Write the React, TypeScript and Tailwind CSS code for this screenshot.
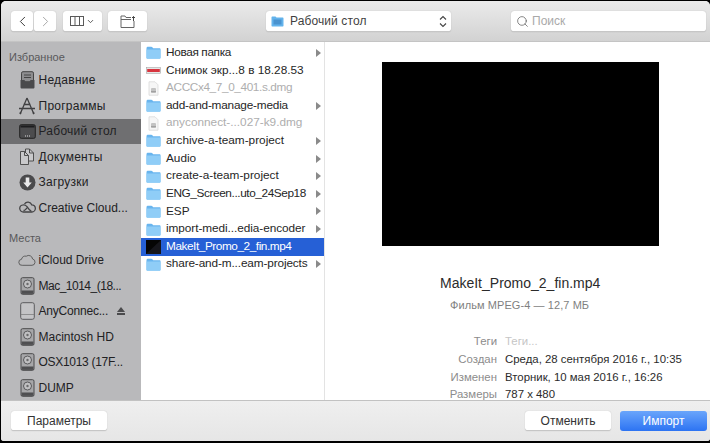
import React from "react";
import { ChevronLeft, ChevronRight, ChevronDown, Search } from "lucide-react";

const Folder = () => (
  <svg width="15" height="13" viewBox="0 0 15 13" className="shrink-0">
    <path d="M0.5 2.2C0.5 1.2 1 .7 2 .7h3.2c.7 0 1 .2 1.4.7l.6.8h6.3c.7 0 1 .4 1 1v8.3c0 .7-.4 1-1 1H1.5c-.7 0-1-.4-1-1z" fill="#69b5ee" />
    <path d="M.5 3.6h14v8.2c0 .7-.4 1-1 1H1.5c-.7 0-1-.4-1-1z" fill="#8fcdf7" />
  </svg>
);
const Dmg = () => (
  <svg width="15" height="15" viewBox="0 0 15 15" className="shrink-0">
    <path d="M3 .8h6l3 3v10.400H3z" fill="#f6f6f6" stroke="#d9d9d9" strokeWidth=".8" />
    <rect x="5" y="7" width="5" height="5" rx="1" fill="#c3c3c3" />
    <rect x="5" y="10.200" width="5" height="1" fill="#999" />
  </svg>
);
const Shot = () => (
  <svg width="15" height="7" viewBox="0 0 15 7" className="shrink-0">
    <rect x=".3" y=".5" width="14.400" height="6" fill="#e6e6e6" stroke="#999" strokeWidth=".5" />
    <rect x="1.200" y="2" width="12.600" height="3" fill="#d8353f" />
  </svg>
);
const Thumb = () => (
  <svg width="15" height="14" viewBox="0 0 15 14" className="shrink-0">
    <rect width="15" height="14" fill="#050505" />
    <path d="M0 14 15 0v14z" fill="#16161c" />
  </svg>
);
const Disk = () => (
  <svg width="15" height="18" viewBox="0 0 15 18" className="shrink-0">
    <rect x="1" y=".7" width="13" height="16.600" rx="1.500" fill="#a7a7a9" stroke="#4a4a4c" />
    <circle cx="7.500" cy="7" r="4" fill="#c0c0c2" stroke="#59595b" />
    <circle cx="7.500" cy="7" r="1.200" fill="#6a6a6c" />
    <rect x="1.500" y="13.500" width="12" height="3.400" fill="#4f4f51" />
  </svg>
);
const Recent = () => (
  <svg width="15" height="18" viewBox="0 0 15 18">
    <rect x="1.500" y=".7" width="12" height="10" rx="1.500" fill="#8d8d8f" stroke="#444" />
    <path d="M4 4h7M4 6.500h7" stroke="#444" />
    <path d="M.5 9h4l1 2h4l1-2h4v7c0 1-.5 1.500-1.500 1.500H2c-1 0-1.500-.5-1.500-1.500z" fill="#4a4a4c" />
  </svg>
);
const Apps = () => (
  <svg width="18" height="18" viewBox="0 0 18 18" fill="none" stroke="#404042" strokeWidth="1.300">
    <path d="M9 1 3 15M9 1l6 14M1 11.500h16M5.500 7.500h7" />
    <path d="M2 17l1-2M16 17l-1-2" strokeWidth="1.800" />
  </svg>
);
const Desktop = () => (
  <svg width="17" height="15" viewBox="0 0 17 15">
    <rect x=".7" y=".7" width="15.600" height="13.600" rx="1.500" fill="#4c4c4e" stroke="#222" />
    <rect x="1.500" y="1.500" width="14" height="2" fill="#1d1d1f" />
    <path d="M6 12h1M8 12h1M10 12h1" stroke="#ddd" />
  </svg>
);
const Docs = () => (
  <svg width="16" height="17" viewBox="0 0 16 17" fill="#c9c9cb" stroke="#444" strokeWidth=".9">
    <path d="M6.500 1h4l4 4v8h-8z" />
    <path d="M10.500 1v4h4" fill="none" />
    <path d="M1.500 3.500h4l4 4v9h-8z" />
    <path d="M5.500 3.500v4h4" fill="none" />
  </svg>
);
const Downloads = () => (
  <svg width="17" height="17" viewBox="0 0 17 17">
    <circle cx="8.500" cy="8.500" r="8" fill="#4a4a4c" />
    <path d="M6.700 3.500h3.600v5h2.500L8.500 13.500 4.200 8.500h2.500z" fill="#e9e9ea" />
  </svg>
);
const CC = () => (
  <svg width="17" height="14" viewBox="0 0 17 14" fill="none" stroke="#444446" strokeWidth="1.300">
    <path d="M5.500 3a4 4 0 0 1 7.200.8A3.500 3.500 0 0 1 12.800 11H4.500a3.600 3.600 0 0 1-.3-7.200 4 4 0 0 1 3.600 1.700l2.500 3.200c.6.800 1.300 1 2 1" />
    <path d="M4.500 9.500c1 0 1.600-.4 2.200-1.100l1.300-1.500" />
  </svg>
);
const Cloud = () => (
  <svg width="18" height="12" viewBox="0 0 18 12" fill="none" stroke="#555" strokeWidth=".9">
    <path d="M4.200 11.300h9.800a3.200 3.200 0 0 0 .6-6.300 4 4 0 0 0-6.300-2.800A3.800 3.800 0 0 0 3.500 5.300a3 3 0 0 0 .7 6z" />
  </svg>
);
const Usb = () => (
  <svg width="15" height="18" viewBox="0 0 15 18">
    <rect x=".7" y=".7" width="13.600" height="16.600" rx="2" fill="#c4c4c6" stroke="#5c5c5e" />
    <path d="M1 12.500h13" stroke="#777" strokeWidth=".7" />
  </svg>
);

const Side = ({ icon, label, sel, eject, cls = "tracking-[0.25px]" }: { icon: React.ReactNode; label: string; sel?: boolean; eject?: boolean; cls?: string }) => (
  <div className={`h-[25.500px] flex items-center pl-[17px] ${sel ? "bg-[#6f6f71]" : ""}`}>
    <span className="w-[18px] flex justify-center shrink-0">{icon}</span>
    <span className={`ml-[2.500px] text-[#212123] whitespace-nowrap ${cls}`}>{label}</span>
    {eject && (
      <span className="ml-[9px] flex flex-col items-center gap-[1px]">
        <span className="w-0 h-0 border-l-[4px] border-r-[4px] border-b-[5px] border-l-transparent border-r-transparent border-b-[#4b4b4d]" />
        <span className="w-[8px] h-[2px] bg-[#4b4b4d]" />
      </span>
    )}
  </div>
);

const Head = ({ children, cls }: { children: React.ReactNode; cls: string }) => (
  <div className={`pl-[8px] text-[11px] text-[#58585a] leading-[14px] ${cls}`}>{children}</div>
);

type F = { icon: React.ReactNode; name: string; arrow?: boolean; dim?: boolean; sel?: boolean; cls?: string };

const File = ({ icon, name, arrow, dim, sel, cls = "" }: F) => (
  <div className={`h-[17.640px] flex items-center pl-[5px] pr-[3px] ${sel ? "bg-[#2660d6] text-white" : dim ? "text-[#aeaeae]" : "text-[#262626]"}`}>
    <span className="w-[15px] flex justify-center shrink-0">{icon}</span>
    <span className={`ml-[5px] flex-1 whitespace-nowrap text-[11.800px] ${cls}`}>{name}</span>
    {arrow && <span className="w-0 h-0 border-t-[4px] border-b-[4px] border-l-[5px] border-t-transparent border-b-transparent border-l-[#8a8a8a]" />}
  </div>
);

const Btn = ({ children, cls }: { children: React.ReactNode; cls: string }) => (
  <div className={`bg-white rounded-[3px] border-b border-[#c6c6c6] shadow-[0_0_1px_rgba(0,0,0,0.25)] flex items-center justify-center ${cls}`}>{children}</div>
);

const Row = ({ k, v, dim }: { k: string; v: string; dim?: boolean }) => (
  <div className="flex h-[17.700px] items-center text-[11.400px]">
    <span className="w-[97px] text-right text-[#8c8c8c] shrink-0">{k}</span>
    <span className={`ml-[8px] whitespace-nowrap ${dim ? "text-[#c6c6c6]" : "text-[#2b2b2b]"}`}>{v}</span>
  </div>
);

const files: F[] = [
  { icon: <Folder />, name: "Новая папка", arrow: true, cls: "tracking-[-0.35px]" },
  { icon: <Shot />, name: "Снимок экр...8 в 18.28.53" },
  { icon: <Dmg />, name: "ACCCx4_7_0_401.s.dmg", dim: true, cls: "tracking-[-0.38px]" },
  { icon: <Folder />, name: "add-and-manage-media", arrow: true, cls: "tracking-[-0.2px]" },
  { icon: <Dmg />, name: "anyconnect-...027-k9.dmg", dim: true },
  { icon: <Folder />, name: "archive-a-team-project", arrow: true },
  { icon: <Folder />, name: "Audio", arrow: true },
  { icon: <Folder />, name: "create-a-team-project", arrow: true },
  { icon: <Folder />, name: "ENG_Screen...uto_24Sep18", arrow: true, cls: "tracking-[-0.4px]" },
  { icon: <Folder />, name: "ESP", arrow: true },
  { icon: <Folder />, name: "import-medi...edia-encoder", arrow: true, cls: "tracking-[-0.06px]" },
  { icon: <Thumb />, name: "MakeIt_Promo_2_fin.mp4", sel: true, cls: "tracking-[-0.44px]" },
  { icon: <Folder />, name: "share-and-m...eam-projects", arrow: true, cls: "tracking-[-0.13px]" },
];

export default function App() {
  return (
    <div className="w-[710px] h-[443px] bg-black pt-[1px] overflow-hidden text-[12px] font-['Liberation_Sans',sans-serif]">
      <div className="ml-[1px] h-[440px] rounded-t-[5px] rounded-b-[3px] overflow-hidden flex flex-col bg-[#ececec]">
        <div className="h-[41px] shrink-0 bg-gradient-to-b from-[#ebebeb] to-[#d2d2d2] border-b border-[#c4c4c4] flex items-center pl-[10px] pt-[1px]">
          <Btn cls="h-[21px] w-[22px] text-[#3c3c3c]"><ChevronLeft size={17} strokeWidth={1.400} /></Btn>
          <Btn cls="h-[21px] w-[22px] ml-[1px] text-[#a8a8a8]"><ChevronRight size={17} strokeWidth={1.400} /></Btn>
          <Btn cls="h-[21px] w-[39px] ml-[7px] text-[#555] gap-[2px]">
            <svg width="14" height="10" viewBox="0 0 14 10" fill="none" stroke="#5a5a5a">
              <rect x=".5" y=".5" width="13" height="9" /><path d="M5 .5v9M9.500 .5v9" />
            </svg>
            <ChevronDown size={9} strokeWidth={2.500} />
          </Btn>
          <Btn cls="h-[21px] w-[39px] ml-[6px]">
            <svg width="16" height="13" viewBox="0 0 16 13" fill="none" stroke="#666">
              <path d="M11 2.500H6L5 1H1v11.500h13V6" /><path d="M1 4.500h10" />
              <path d="M13.500 6V1.500" stroke="#444" /><path d="M12 3l1.500-1.500L15 3" stroke="#444" />
            </svg>
          </Btn>
          <Btn cls="h-[21px] w-[185px] ml-[119px] !justify-start pl-[5px]">
            <svg width="13" height="11" viewBox="0 0 13 11"><path d="M.5 1.500C.5.800.9.500 1.500.500h3l1 1h6c.7 0 1 .3 1 1v7c0 .7-.3 1-1 1h-10c-.7 0-1-.3-1-1z" fill="#63b3ec" /><rect x="2.500" y="3.500" width="8" height="5" fill="#4a93cf" /></svg>
            <span className="ml-[6px] text-[#3f3f3f] tracking-[0.1px]">Рабочий стол</span>
            <svg className="ml-auto mr-[4px]" width="8" height="13" viewBox="0 0 8 13" fill="none" stroke="#444" strokeWidth="1.100"><path d="M1 4.500 4 1.500l3 3M1 8.500l3 3 3-3" /></svg>
          </Btn>
          <Btn cls="h-[21px] w-[195px] ml-[60px] !justify-start pl-[5px]">
            <Search size={13} strokeWidth={1.300} className="text-[#555]" />
            <span className="ml-[3px] text-[#a9a9a9]">Поиск</span>
          </Btn>
        </div>
        <div className="flex-1 flex min-h-0 bg-white">
          <div className="w-[140px] shrink-0 bg-[#b9b9bb] overflow-hidden">
            <Head cls="mt-[8px] mb-[3.500px]">Избранное</Head>
            <Side icon={<Recent />} label="Недавние" />
            <Side icon={<Apps />} label="Программы" />
            <Side icon={<Desktop />} label="Рабочий стол" sel />
            <Side icon={<Docs />} label="Документы" />
            <Side icon={<Downloads />} label="Загрузки" />
            <Side icon={<CC />} label="Creative Cloud..." cls="" />
            <Head cls="mt-[10px] mb-[3px]">Места</Head>
            <Side icon={<Cloud />} label="iCloud Drive" cls="" />
            <Side icon={<Disk />} label="Mac_1014_(18..." cls="tracking-[-0.5px]" />
            <Side icon={<Usb />} label="AnyConnec..." eject cls="tracking-[-0.2px]" />
            <Side icon={<Disk />} label="Macintosh HD" cls="" />
            <Side icon={<Disk />} label="OSX1013 (17F..." cls="tracking-[-0.3px]" />
            <Side icon={<Disk />} label="DUMP" cls="" />
          </div>
          <div className="w-[184px] shrink-0 border-r border-[#e3e3e3] pt-[2px]">
            {files.map((f) => <File key={f.name} {...f} />)}
          </div>
          <div className="flex-1 flex flex-col overflow-hidden">
            <div className="w-[277px] h-[184px] bg-black ml-[57px] mt-[20px] shrink-0" />
            <div className="mt-[27px] ml-[115px] text-[14px] leading-[20px] text-[#2b2b2b] whitespace-nowrap">MakeIt_Promo_2_fin.mp4</div>
            <div className="mt-[5px] ml-[125px] text-[11px] leading-[14px] text-[#7f7f7f] whitespace-nowrap tracking-[0.08px]">Фильм MPEG-4 — 12,7 МБ</div>
            <div className="mt-[21px] ml-[75px]">
              <Row k="Теги" v="Теги..." dim />
              <Row k="Создан" v="Среда, 28 сентября 2016 г., 10:35" />
              <Row k="Изменен" v="Вторник, 10 мая 2016 г., 16:26" />
              <Row k="Размеры" v="787 x 480" />
            </div>
          </div>
        </div>
        <div className="h-[41px] shrink-0 bg-gradient-to-b from-[#efefef] to-[#e6e6e6] border-t border-[#c2c2c2] flex items-center pl-[10px] pr-[3px]">
          <Btn cls="h-[20px] w-[96px] text-[#333]">Параметры</Btn>
          <Btn cls="h-[20px] w-[86px] ml-auto text-[#333]">Отменить</Btn>
          <div className="w-[87px] h-[20px] ml-[9px] rounded-[3px] bg-gradient-to-b from-[#6aa5fb] to-[#2c73f2] text-white flex items-center justify-center">Импорт</div>
        </div>
      </div>
    </div>
  );
}
